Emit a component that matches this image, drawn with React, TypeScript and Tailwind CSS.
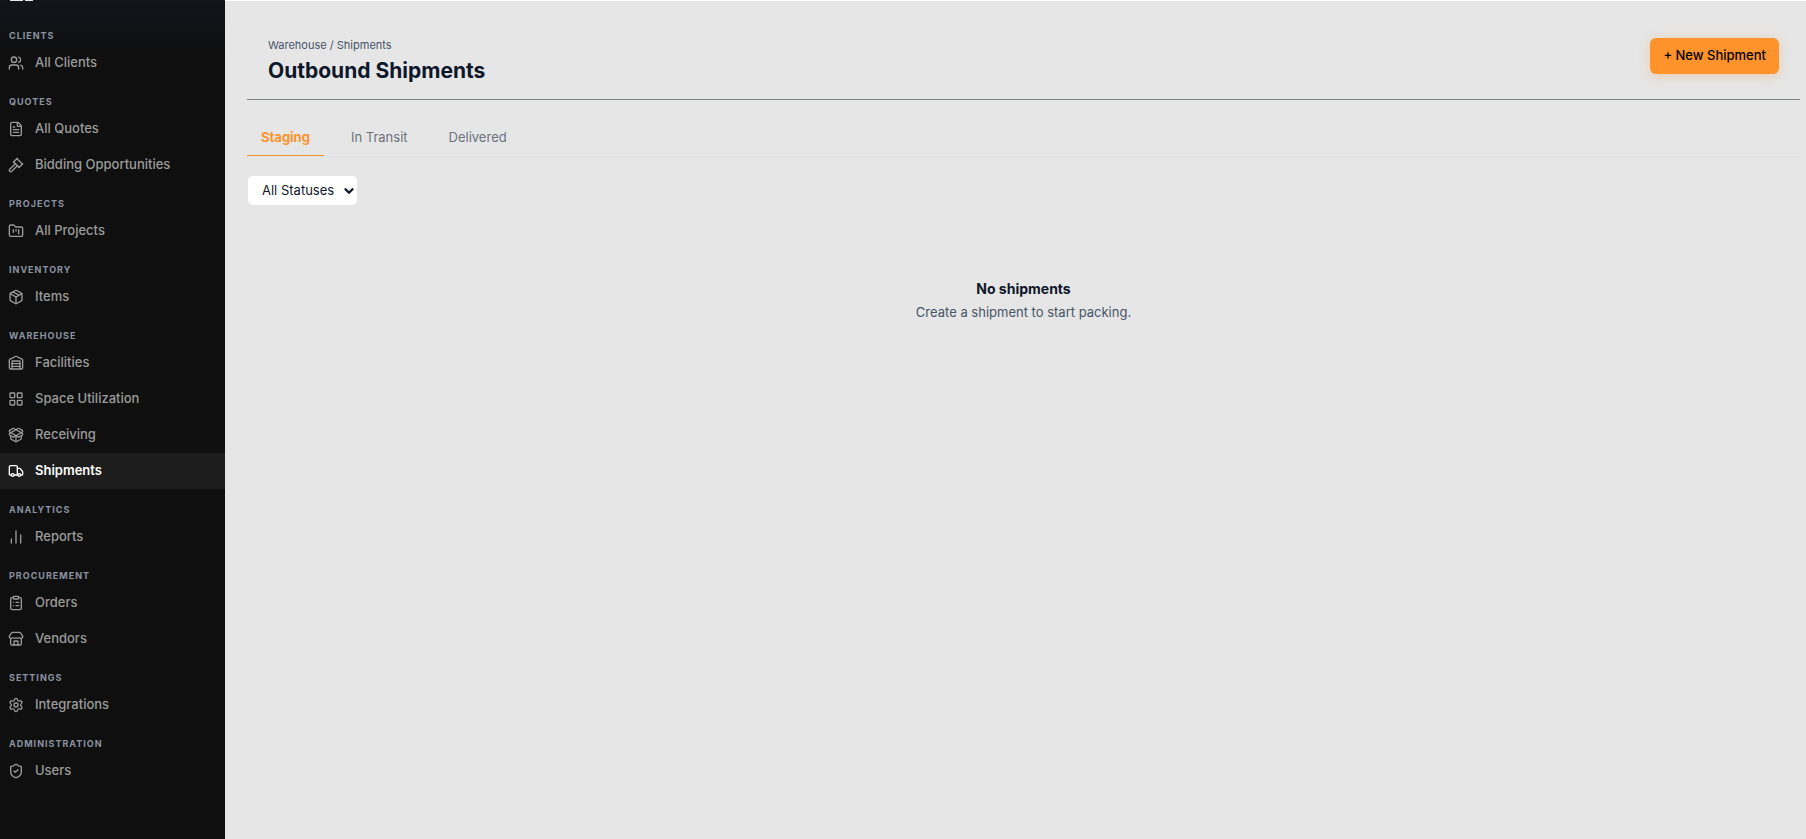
import type { ComponentType } from "react";
import {
  ChartNoAxesColumn,
  ChevronDown,
  ClipboardList,
  FileText,
  FolderKanban,
  Gavel,
  LayoutGrid,
  Package,
  PackageOpen,
  Settings,
  ShieldCheck,
  Store,
  Truck,
  Users,
  Warehouse,
} from "lucide-react";

type Icon = ComponentType<{ className?: string; strokeWidth?: number }>;
type Item = { label: string; icon: Icon; active?: boolean };
type Group = { title: string; items: Item[] };

const groups: Group[] = [
  { title: "Clients", items: [{ label: "All Clients", icon: Users }] },
  {
    title: "Quotes",
    items: [
      { label: "All Quotes", icon: FileText },
      { label: "Bidding Opportunities", icon: Gavel },
    ],
  },
  { title: "Projects", items: [{ label: "All Projects", icon: FolderKanban }] },
  { title: "Inventory", items: [{ label: "Items", icon: Package }] },
  {
    title: "Warehouse",
    items: [
      { label: "Facilities", icon: Warehouse },
      { label: "Space Utilization", icon: LayoutGrid },
      { label: "Receiving", icon: PackageOpen },
      { label: "Shipments", icon: Truck, active: true },
    ],
  },
  { title: "Analytics", items: [{ label: "Reports", icon: ChartNoAxesColumn }] },
  {
    title: "Procurement",
    items: [
      { label: "Orders", icon: ClipboardList },
      { label: "Vendors", icon: Store },
    ],
  },
  { title: "Settings", items: [{ label: "Integrations", icon: Settings }] },
  { title: "Administration", items: [{ label: "Users", icon: ShieldCheck }] },
];

function NavItem({ label, icon: Glyph, active }: Item) {
  return (
    <li>
      <a
        href="#"
        aria-current={active ? "page" : undefined}
        className={
          active
            ? "flex h-9 items-center gap-[11px] bg-[#1d1d1d] px-2 text-[13px] font-semibold text-white"
            : "flex h-9 items-center gap-[11px] px-2 text-[13px] font-medium text-[#9b9b9b]"
        }
      >
        <Glyph className="size-4 shrink-0" strokeWidth={2} />
        {label}
      </a>
    </li>
  );
}

function Sidebar() {
  return (
    <aside className="w-[225px] shrink-0 bg-[#0f0f0f] bg-linear-to-b from-[#11151c] to-[#0f0f0f] to-[56px]">
      <div className="flex h-[15px] gap-0.5 px-2.5">
        <span className="h-px w-[13px] bg-[#e5e7eb]" />
        <span className="h-px w-2 bg-[#e5e7eb]" />
      </div>
      <nav aria-label="Main">
        {groups.map((group) => (
          <section key={group.title}>
            <h2 className="px-[9px] pt-3 text-[9px] leading-[18px] font-bold tracking-[1px] text-[#8b93a1] uppercase">
              {group.title}
            </h2>
            <ul>
              {group.items.map((item) => (
                <NavItem key={item.label} {...item} />
              ))}
            </ul>
          </section>
        ))}
      </nav>
    </aside>
  );
}

function Header() {
  return (
    <header className="flex items-start justify-between border-b border-[#7d828b] px-[21px] pt-[35px] pb-3.5">
      <div>
        <nav aria-label="Breadcrumb" className="text-[11px] leading-[18px] text-[#475569]">
          <a href="#">Warehouse</a> / <a href="#">Shipments</a>
        </nav>
        <h1 className="pt-[3px] text-[21px] leading-7 font-bold text-[#0f172a]">Outbound Shipments</h1>
      </div>
      <button
        type="button"
        className="mt-0.5 h-9 rounded-md bg-[#fd932a] px-[13px] text-[13px] font-medium text-black shadow-[0_2px_12px_rgba(253,147,42,0.3)]"
      >
        + New Shipment
      </button>
    </header>
  );
}

function Tabs() {
  return (
    <div role="tablist" className="mt-5 flex gap-[13px] border-b border-[#e0e1e8] text-[13px] text-[#6b7280]">
      <button type="button" role="tab" aria-selected="true" className="-mb-px h-9 border-b border-[#fd932a] px-3.5 font-bold text-[#fd932a]">
        Staging
      </button>
      <button type="button" role="tab" aria-selected="false" className="h-9 px-3.5">
        In Transit
      </button>
      <button type="button" role="tab" aria-selected="false" className="h-9 px-3.5">
        Delivered
      </button>
    </div>
  );
}

function StatusFilter() {
  return (
    <div className="mt-[19px] grid w-[110px] items-center pl-px">
      <select
        aria-label="Status"
        className="col-start-1 row-start-1 h-[29px] w-full appearance-none rounded-[5px] bg-white pl-3.5 text-[13px] text-[#0f172a]"
      >
        <option>All Statuses</option>
      </select>
      <ChevronDown className="pointer-events-none col-start-1 row-start-1 mr-px size-3.5 justify-self-end text-[#0f172a]" strokeWidth={4} />
    </div>
  );
}

export default function App() {
  return (
    <div className="flex min-h-screen bg-[#e6e6e6] font-[Inter,sans-serif]">
      <Sidebar />
      <main className="min-w-0 flex-1 border-t border-white pr-1.5 pl-[22px]">
        <Header />
        <Tabs />
        <StatusFilter />
        <section className="pt-[72px] text-center">
          <h2 className="text-[14px] leading-6 font-bold text-[#0f172a]">No shipments</h2>
          <p className="text-[13px] leading-[23px] text-[#475569]">Create a shipment to start packing.</p>
        </section>
      </main>
    </div>
  );
}
